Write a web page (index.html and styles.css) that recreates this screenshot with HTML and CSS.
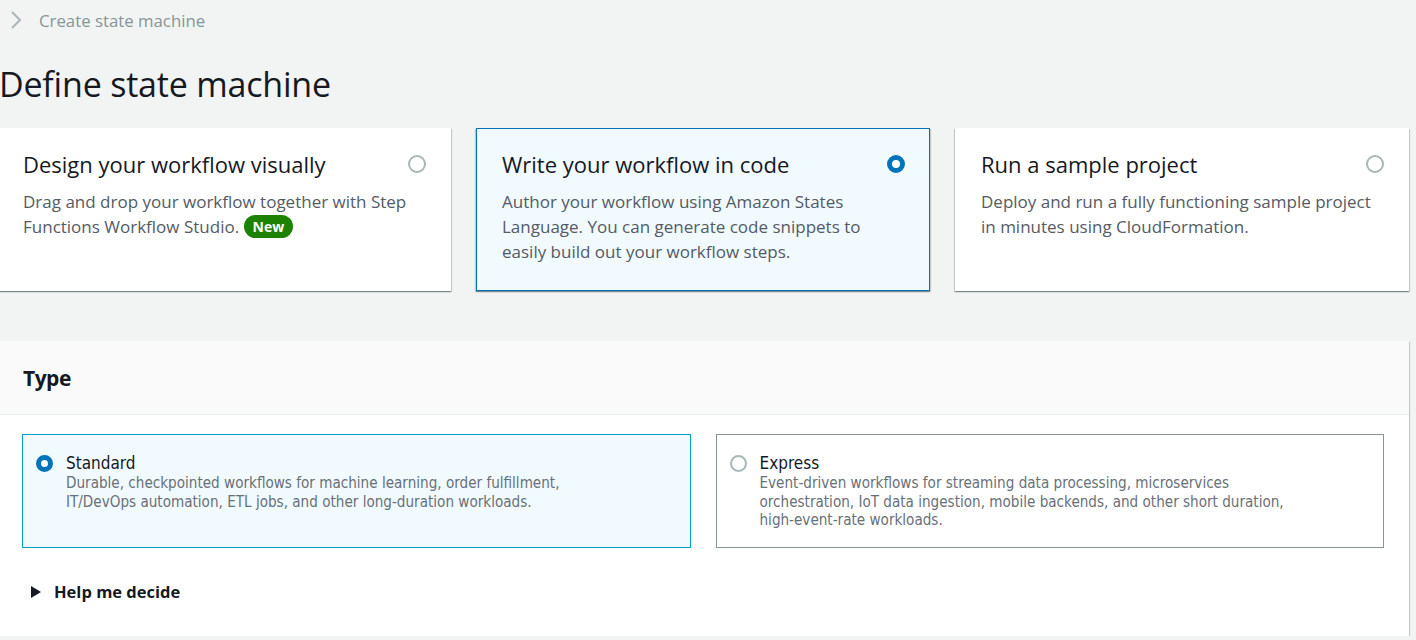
FILE: index.html
```html
<!DOCTYPE html>
<html>
<head>
<meta charset="utf-8">
<link rel="stylesheet" href="styles.css">
</head>
<body>
<div class="page">
  <nav class="crumbs">
    <svg class="chev" width="14" height="20" viewBox="0 0 14 20"><path d="M3 2 L11 10 L3 18" fill="none" stroke="#aab7b8" stroke-width="2"/></svg>
    <span class="crumb">Create state machine</span>
  </nav>
  <h1 class="title">Define state machine</h1>
  <div class="cards">
    <div class="card">
      <div class="card-head">
        <span class="card-title">Design your workflow visually</span>
        <span class="radio"></span>
      </div>
      <p class="card-desc">Drag and drop your workflow together with Step Functions Workflow Studio. <span class="badge">New</span></p>
    </div>
    <div class="card card-selected">
      <div class="card-head">
        <span class="card-title">Write your workflow in code</span>
        <span class="radio radio-on"></span>
      </div>
      <p class="card-desc">Author your workflow using Amazon States Language. You can generate code snippets to easily build out your workflow steps.</p>
    </div>
    <div class="card">
      <div class="card-head">
        <span class="card-title">Run a sample project</span>
        <span class="radio"></span>
      </div>
      <p class="card-desc">Deploy and run a fully functioning sample project in minutes using CloudFormation.</p>
    </div>
  </div>
  <section class="panel">
    <header class="panel-head"><h2 class="panel-title">Type</h2></header>
    <div class="panel-body">
      <div class="tiles">
        <div class="tile tile-selected">
          <span class="radio radio-on small"></span>
          <div class="tile-text">
            <div class="tile-label">Standard</div>
            <div class="tile-desc">Durable, checkpointed workflows for machine learning, order fulfillment, IT/DevOps automation, ETL jobs, and other long-duration workloads.</div>
          </div>
        </div>
        <div class="tile">
          <span class="radio small"></span>
          <div class="tile-text">
            <div class="tile-label">Express</div>
            <div class="tile-desc">Event-driven workflows for streaming data processing, microservices orchestration, IoT data ingestion, mobile backends, and other short duration, high-event-rate workloads.</div>
          </div>
        </div>
      </div>
      <div class="help">
        <svg width="10" height="12" viewBox="0 0 10 12"><path d="M0 0 L10 6 L0 12 Z" fill="#16191f"/></svg>
        <span>Help me decide</span>
      </div>
    </div>
  </section>
</div>
</body>
</html>
```
FILE: styles.css
```css
html, body {
  margin: 0;
  padding: 0;
  background: #f2f3f3;
  font-family: "Open Sans", "Noto Sans", sans-serif;
  color: #16191f;
}
.page {
  width: 1412px;
  margin-left: -3px;
}
.crumbs {
  display: flex;
  align-items: center;
  height: 40px;
  padding-left: 12px;
  gap: 16px;
}
.crumb {
  font-size: 16.8px;
  color: #879596;
}
.title {
  margin: 22px 0 0 2px;
  font-size: 34px;
  font-weight: 400;
  line-height: 44px;
  height: 44px;
  letter-spacing: -0.2px;
}
.cards {
  margin-top: 22px;
  display: grid;
  grid-template-columns: repeat(3, 1fr);
  gap: 25px;
}
.card {
  background: #fff;
  height: 163px;
  box-sizing: border-box;
  padding: 20px 24px 0 25px;
  box-shadow: 0 1px 1px 0 rgba(0,28,36,.3), 1px 1px 1px 0 rgba(0,28,36,.15), -1px 1px 1px 0 rgba(0,28,36,.15);
  border: 1px solid transparent;
}
.card-selected {
  background: #f1faff;
  border-color: #0073bb;
}
.card-head {
  display: flex;
  justify-content: space-between;
  align-items: center;
}
.card-title {
  font-size: 22px;
  line-height: 30px;
}
.card-desc {
  margin: 10px 0 0;
  font-size: 17px;
  line-height: 25px;
  color: #545b64;
  padding-right: 8px;
}
.radio {
  width: 14px;
  height: 14px;
  border: 2px solid #aab7b8;
  border-radius: 50%;
  background: #fff;
  flex: none;
}
.radio-on {
  border: 5px solid #0073bb;
  width: 8px;
  height: 8px;
}
.badge {
  display: inline-block;
  background: #1d8102;
  color: #fff;
  font-weight: 700;
  font-size: 14px;
  line-height: 23px;
  padding: 0 9px;
  border-radius: 12px;
  vertical-align: 1px;
}
.panel {
  margin-top: 50px;
  background: #fff;
  box-shadow: 0 1px 1px 0 rgba(0,28,36,.3), 1px 1px 1px 0 rgba(0,28,36,.15), -1px 1px 1px 0 rgba(0,28,36,.15);
}
.panel-head {
  background: #fafafa;
  height: 73px;
  border-bottom: 1px solid #eaeded;
  display: flex;
  align-items: center;
  padding-left: 26px;
}
.panel-title {
  margin: 0;
  font-size: 21px;
  font-weight: 700;
  letter-spacing: -0.5px;
}
.panel-body {
  padding: 19px 25px 0 25px;
  height: 221px;
  box-sizing: border-box;
}
.tiles {
  display: grid;
  grid-template-columns: 1fr 1fr;
  gap: 25px;
}
.tile {
  height: 114px;
  box-sizing: border-box;
  border: 1px solid #879596;
  display: flex;
  padding: 18px 13px 0 13px;
  gap: 13px;
  font-family: "DejaVu Sans", sans-serif;
  font-stretch: condensed;
}
.tile-selected {
  background: #f1faff;
  border-color: #00a1c9;
}
.radio.small {
  margin-top: 2px;
  width: 13px;
  height: 13px;
}
.radio-on.small {
  width: 7px;
  height: 7px;
  border-width: 5px;
}
.tile-label {
  font-size: 17px;
  line-height: 20px;
  color: #16191f;
}
.tile-desc {
  margin-top: 1px;
  font-size: 15.1px;
  line-height: 18.5px;
  color: #687078;
  max-width: 540px;
}
.help {
  display: flex;
  align-items: center;
  gap: 13px;
  margin-top: 32px;
  padding-left: 9px;
  font-weight: 700;
  font-size: 16.5px;
}
```
